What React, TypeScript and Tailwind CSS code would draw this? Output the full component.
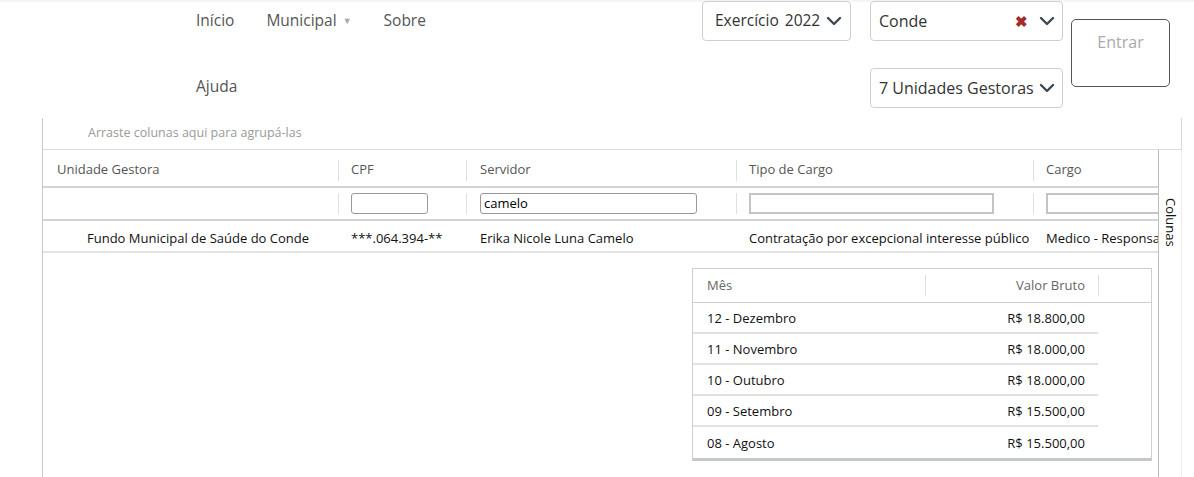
import { ReactNode } from "react";

const months = [
  { mes: "12 - Dezembro", valor: "R$ 18.800,00" },
  { mes: "11 - Novembro", valor: "R$ 18.000,00" },
  { mes: "10 - Outubro", valor: "R$ 18.000,00" },
  { mes: "09 - Setembro", valor: "R$ 15.500,00" },
  { mes: "08 - Agosto", valor: "R$ 15.500,00" },
];

function Chevron() {
  return (
    <svg width="16" height="10" viewBox="0 0 16 10" className="shrink-0">
      <polyline points="2,2 8,8 14,2" fill="none" stroke="#3f4752" strokeWidth="2.4" strokeLinecap="round" strokeLinejoin="round" />
    </svg>
  );
}

function Select({ width, children, clear }: { width: string; children: ReactNode; clear?: boolean }) {
  return (
    <div className={`${width} h-[40px] flex items-center border border-[#cfcfcf] rounded-[4px] bg-white pl-[8px] pr-[7px] text-[16px] text-[#333]`}>
      <span className="flex-1 whitespace-nowrap">{children}</span>
      {clear && <span className="text-[#a52a2a] text-[15px] font-bold mr-[11px] leading-none">✖</span>}
      <Chevron />
    </div>
  );
}

// short separator between header cells
function Sep() {
  return <div className="w-px h-[21px] shrink-0 bg-[#e0e0e0]" />;
}

export default function App() {
  return (
    <div className="w-[1194px] h-[477px] overflow-hidden bg-white font-['Open_Sans',sans-serif] text-[#333]">
      {/* Header */}
      <div className="h-[118px] flex justify-between shadow-[inset_0_3px_3px_-2px_rgba(0,0,0,0.08)]">
        <nav className="ml-[196px] text-[15.5px] text-[#555]">
          <div className="h-[40px] mt-[1px] flex items-center">
            <span>Início</span>
            <span className="ml-[32px]">Municipal</span>
            <span className="ml-[6px] text-[9px] text-[#aaa]">▼</span>
            <span className="ml-[32px]">Sobre</span>
          </div>
          <div className="h-[40px] mt-[26px] flex items-center">Ajuda</div>
        </nav>
        <div className="flex items-start mr-[24px] mt-[1px]">
          <div className="flex flex-col">
            <div className="flex gap-[19px]">
              <div className="w-[149px] h-[40px] flex items-center border border-[#cfcfcf] rounded-[4px] pl-[12px] pr-[8px] text-[15.5px] text-[#333]">
                <span className="flex-1 whitespace-nowrap">
                  Exercício<span className="ml-[6px]">2022</span>
                </span>
                <Chevron />
              </div>
              <Select width="w-[193px]" clear>Conde</Select>
            </div>
            <div className="flex justify-end mt-[27px]">
              <Select width="w-[193px]">7 Unidades Gestoras</Select>
            </div>
          </div>
          <button className="ml-[8px] mt-[18px] w-[99px] h-[68px] border border-[#555] rounded-[5px] bg-white text-[16px] text-[#aaa] flex justify-center pt-[10px]">
            Entrar
          </button>
        </div>
      </div>

      {/* Grid */}
      <div className="ml-[42px] w-[1140px] h-[359px] border-l border-[#c8c8c8] flex flex-col">
        <div className="h-[31px] shrink-0 border-r border-[#d8d8d8] flex items-center pl-[45px] text-[12.5px] text-[#9a9a9a]">
          Arraste colunas aqui para agrupá-las
        </div>
        <div className="flex flex-1 min-h-0 border-t border-[#dcdcdc]">
          <div className="flex-1 min-w-0 overflow-hidden text-[13px]">
            {/* header row */}
            <div className="h-[38px] pt-[4px] flex items-center border-b-2 border-[#d3d3d3] text-[#555] whitespace-nowrap">
              <div className="w-[295px] shrink-0 pl-[14px]">Unidade Gestora</div>
              <Sep />
              <div className="w-[127px] shrink-0 pl-[12px]">CPF</div>
              <Sep />
              <div className="w-[269px] shrink-0 pl-[13px]">Servidor</div>
              <Sep />
              <div className="w-[296px] shrink-0 pl-[12px]">Tipo de Cargo</div>
              <Sep />
              <div className="shrink-0 pl-[12px]">Cargo</div>
            </div>
            {/* filter row */}
            <div className="h-[33px] flex items-center border-b-2 border-[#d3d3d3] whitespace-nowrap">
              <div className="w-[295px] shrink-0" />
              <Sep />
              <div className="w-[127px] shrink-0 pl-[12px]">
                <div className="w-[77px] h-[21px] border border-[#999] rounded-[3px]" />
              </div>
              <Sep />
              <div className="w-[269px] shrink-0 pl-[13px]">
                <div className="w-[217px] h-[21px] border border-[#999] rounded-[3px] flex items-center pl-[3px] text-[#000]">camelo</div>
              </div>
              <Sep />
              <div className="w-[296px] shrink-0 pl-[12px]">
                <div className="w-[245px] h-[21px] border-2 border-[#c4c4c4]" />
              </div>
              <Sep />
              <div className="shrink-0 pl-[12px]">
                <div className="w-[130px] h-[21px] border-2 border-[#c4c4c4]" />
              </div>
            </div>
            {/* data row */}
            <div className="h-[32px] pt-[5px] flex items-center border-b-2 border-[#e3e3e3] text-[#111] whitespace-nowrap">
              <div className="w-[295px] shrink-0 pl-[44px]">Fundo Municipal de Saúde do Conde</div>
              <div className="w-px shrink-0" />
              <div className="w-[127px] shrink-0 pl-[12px]">***.064.394-**</div>
              <div className="w-px shrink-0" />
              <div className="w-[269px] shrink-0 pl-[13px]">Erika Nicole Luna Camelo</div>
              <div className="w-px shrink-0" />
              <div className="w-[296px] shrink-0 pl-[12px]">Contratação por excepcional interesse público</div>
              <div className="w-px shrink-0" />
              <div className="shrink-0 pl-[12px]">Medico - Responsavel Tecnico</div>
            </div>
            {/* detail */}
            <div className="ml-[649px] mt-[15px] w-[460px] border border-[#cfcfcf] border-b-[3px] border-b-[#c6c9cc]">
              <div className="h-[34px] flex items-center border-b border-[#cfcfcf] text-[#666]">
                <div className="w-[232px] shrink-0 pl-[14px]">Mês</div>
                <Sep />
                <div className="w-[172px] shrink-0 pr-[13px] text-right">Valor Bruto</div>
                <Sep />
              </div>
              {months.map((m, i) => (
                <div
                  key={m.mes}
                  className={`w-[405px] h-[31px] pt-[2px] flex items-center text-[#111] ${i < months.length - 1 ? "border-b-2 border-[#e2e2e2]" : ""}`}
                >
                  <div className="w-[233px] shrink-0 pl-[14px]">{m.mes}</div>
                  <div className="w-[159px] shrink-0 text-right">{m.valor}</div>
                </div>
              ))}
            </div>
          </div>
          {/* column chooser tab */}
          <div className="w-[24px] shrink-0 border-l border-[#bdbdbd] border-r border-r-[#eeeeee] flex justify-center pt-[48px]">
            <span className="[writing-mode:vertical-rl] text-[13px] text-[#111]">Colunas</span>
          </div>
        </div>
      </div>
    </div>
  );
}
